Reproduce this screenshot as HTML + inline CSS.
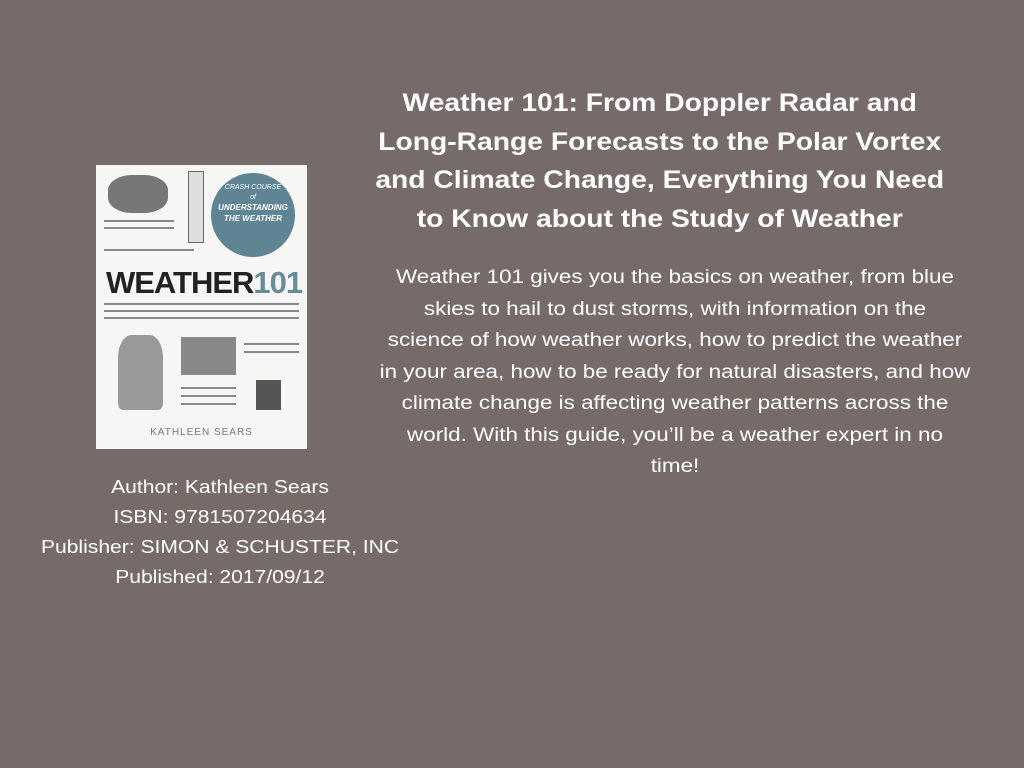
<!DOCTYPE html>
<html><head><meta charset="utf-8"><style>
html,body{margin:0;padding:0}
body{width:1024px;height:768px;background:#776b69;position:relative;overflow:hidden;font-family:"Liberation Sans",sans-serif;color:#fff}
.t{position:absolute;left:340px;width:640px;text-align:center;font-weight:bold;font-size:25px;line-height:38.5px;top:84px;transform:scaleX(1.13);transform-origin:322px 0}
.b{position:absolute;left:360px;width:630px;text-align:center;font-size:19px;line-height:31.5px;top:262px;transform:scaleX(1.18);transform-origin:315px 0}
.a{position:absolute;left:20px;width:400px;text-align:center;font-size:18px;line-height:30px;top:472px;transform:scaleX(1.17);transform-origin:200px 0}
.cov{position:absolute;left:96px;top:165px;width:211px;height:284px;background:#f6f6f4;overflow:hidden}
.circ{position:absolute;left:115px;top:8px;width:84px;height:84px;border-radius:50%;background:#5f8594;color:#fff;font-size:7px;text-align:center;line-height:10px;font-style:italic}
.w{position:absolute;left:10px;top:100px;font-size:31px;font-weight:bold;color:#222;letter-spacing:-1px}
.w span{color:#6a8c98}
.sm{position:absolute;height:2px;background:#888}
</style></head><body>
<div class="t">Weather 101: From Doppler Radar and<br>Long-Range Forecasts to the Polar Vortex<br>and Climate Change, Everything You Need<br>to Know about the Study of Weather</div>
<div class="b">Weather 101 gives you the basics on weather, from blue<br>skies to hail to dust storms, with information on the<br>science of how weather works, how to predict the weather<br>in your area, how to be ready for natural disasters, and how<br>climate change is affecting weather patterns across the<br>world. With this guide, you’ll be a weather expert in no<br>time!</div>
<div class="cov">
<div style="position:absolute;left:12px;top:10px;width:60px;height:38px;background:#777;border-radius:40%"></div>
<div style="position:absolute;left:92px;top:6px;width:14px;height:70px;border:1px solid #666;background:#ddd"></div>
<div class="sm" style="left:8px;top:55px;width:70px"></div><div class="sm" style="left:8px;top:62px;width:70px"></div>
<div class="sm" style="left:8px;top:84px;width:90px"></div>
<div class="circ"><br>CRASH COURSE<br>of<br><b style="font-size:8px">UNDERSTANDING<br>THE WEATHER</b></div>
<div class="w">WEATHER<span>101</span></div>
<div class="sm" style="left:8px;top:138px;width:195px"></div><div class="sm" style="left:8px;top:145px;width:195px"></div><div class="sm" style="left:8px;top:152px;width:195px"></div>
<div style="position:absolute;left:22px;top:170px;width:45px;height:75px;background:#999;border-radius:30% 30% 10% 10%"></div>
<div style="position:absolute;left:85px;top:172px;width:55px;height:38px;background:#888"></div>
<div class="sm" style="left:148px;top:178px;width:55px"></div><div class="sm" style="left:148px;top:186px;width:55px"></div>
<div class="sm" style="left:85px;top:222px;width:55px"></div><div class="sm" style="left:85px;top:230px;width:55px"></div><div class="sm" style="left:85px;top:238px;width:55px"></div>
<div style="position:absolute;left:160px;top:215px;width:25px;height:30px;background:#555"></div>
<div style="position:absolute;left:0;width:211px;top:262px;text-align:center;color:#777;font-size:10px;letter-spacing:1px">KATHLEEN SEARS</div>
</div>
<div class="a">Author: Kathleen Sears<br>ISBN: 9781507204634<br>Publisher: SIMON &amp; SCHUSTER, INC<br>Published: 2017/09/12</div>
</body></html>
